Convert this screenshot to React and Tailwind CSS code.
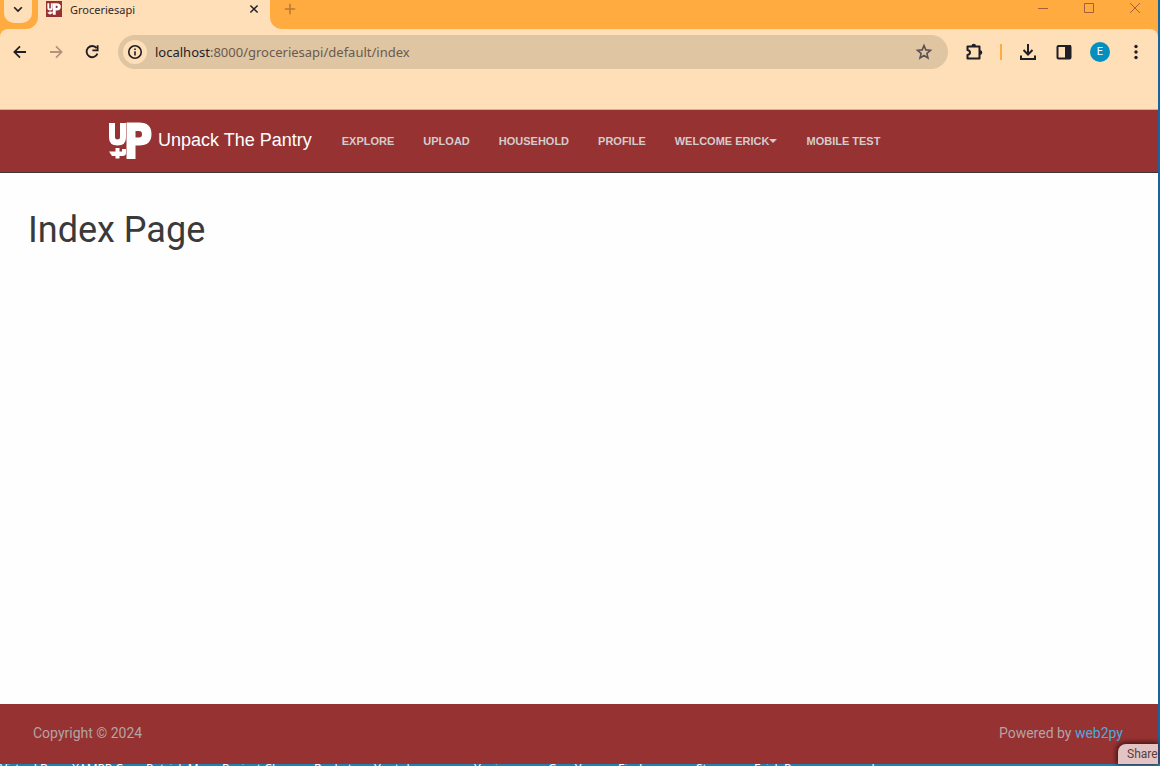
import React from "react";

const navLinks = ["Explore", "Upload", "Household", "Profile"];

const desktopLabels = [
  ["Virtual Box", "w-[72px]"],
  ["XAMPP Co", "w-[74px]"],
  ["Patrick Mo", "w-[76px]"],
  ["Project Ch", "w-[92px]"],
  ["Rocket", "w-[60px]"],
  ["Youtubapps", "w-[100px]"],
  ["Yoni", "w-[74px]"],
  ["Gup Y", "w-[70px]"],
  ["Firefox", "w-[78px]"],
  ["Steam", "w-[58px]"],
  ["Erick Person", "w-[96px]"],
  ["apple", "w-[60px]"],
];

function Logo({ className }) {
  return (
    <svg viewBox="0 0 44 38" className={className} fill="none" stroke="#fff" aria-hidden="true">
      <path d="M4 1V15.500Q4 20.500 9.500 20.500Q15 20.500 15 15.500V1" strokeWidth="6" />
      <path fill="#fff" stroke="none" fillRule="evenodd" d="M18.500 0.500H31Q43.500 0.500 43.500 12Q43.500 23.500 31 23.500H27.500V37H18.500ZM27.500 9V15.500H31Q34 15.500 34 12.200Q34 9 31 9Z" />
      <path fill="#fff" stroke="none" d="M1 29.500H7.500V26H11.500V29.500H14V27H18V31Q18 34 14.500 34H11.500V36.500H7.500V34H4Z" />
    </svg>
  );
}

function Favicon() {
  return (
    <span className="flex size-4 items-center justify-center bg-[#963232]">
      <Logo className="h-3 w-3.5" />
    </span>
  );
}

function Icon({ d, className = "size-5", width = 2, children }) {
  return (
    <svg viewBox="0 0 20 20" className={className} fill="none" stroke="currentColor" strokeWidth={width} aria-hidden="true">
      {d && <path d={d} />}
      {children}
    </svg>
  );
}

function ToolButton({ label, className = "text-[#1f1d26]", children }) {
  return (
    <button type="button" aria-label={label} className={`flex size-9 shrink-0 items-center justify-center ${className}`}>
      {children}
    </button>
  );
}

function TabStrip() {
  return (
    <div className="flex h-[29px] items-stretch">
      <div className="w-[38px] bg-[#ffdfb8]">
        <div className="h-full rounded-br-xl bg-[#ffab40] pl-1">
          <button type="button" aria-label="Search tabs" className="flex h-[23px] w-7 items-center justify-center rounded-b-[10px] bg-[#ffdfb8] pb-1.5 text-[#1f1d26]">
            <Icon className="size-3.5" width={2.400} d="M4.500 7.500L10 13L15.500 7.500" />
          </button>
        </div>
      </div>
      <div className="flex w-[232px] items-start bg-[#ffdfb8] px-2">
        <div className="pt-px"><Favicon /></div>
        <span className="flex-1 pl-2 pt-px font-['Noto_Sans',sans-serif] text-[11px] leading-[18px] text-[#2f2826]">Groceriesapi</span>
        <button type="button" aria-label="Close tab" className="flex size-4 items-center justify-center pt-0.5 text-[#1f1d26]">
          <Icon className="size-3" width={2.400} d="M4 4L16 16M16 4L4 16" />
        </button>
      </div>
      <div className="flex-1 bg-[#ffdfb8]">
        <div className="flex h-full items-start justify-between rounded-bl-xl bg-[#ffab40] pl-3">
          <button type="button" aria-label="New tab" className="flex h-[18px] w-4 items-center justify-center text-[#b97a35]">
            <Icon className="size-4" d="M10 3.500V16.500M3.500 10H16.500" />
          </button>
          <div className="flex text-[#a3623a]">
            <button type="button" aria-label="Minimize" className="flex h-4 w-[46px] items-center justify-center">
              <svg viewBox="0 0 10 10" className="size-2.5" aria-hidden="true"><path d="M0 5.500H10" stroke="currentColor" /></svg>
            </button>
            <button type="button" aria-label="Maximize" className="flex h-4 w-[46px] items-center justify-center">
              <svg viewBox="0 0 10 10" className="size-2.5" fill="none" aria-hidden="true"><path d="M.5 .5H9.500V9.500H.5Z" stroke="currentColor" /></svg>
            </button>
            <button type="button" aria-label="Close" className="flex h-4 w-[46px] items-center justify-center">
              <svg viewBox="0 0 10 10" className="size-2.5" aria-hidden="true"><path d="M0 0L10 10M10 0L0 10" stroke="currentColor" /></svg>
            </button>
          </div>
        </div>
      </div>
    </div>
  );
}

function Toolbar() {
  return (
    <div className="bg-[#ffab40]">
      <div className="flex h-[46px] items-center rounded-t-lg bg-[#ffdfb8] pl-0.5 pr-1">
        <ToolButton label="Back"><Icon className="size-4" width={2.200} d="M17.500 10H3.500M10 3L3 10L10 17" /></ToolButton>
        <ToolButton label="Forward" className="text-[#b5927c]"><Icon className="size-4" width={2.200} d="M2.500 10H16.500M10 3L17 10L10 17" /></ToolButton>
        <ToolButton label="Reload">
          <Icon className="size-4" width={2.300}><path d="M15.800 5.200A7 7 0 1 0 16.800 12" /><path d="M17 1.500V8H10.500" /></Icon>
        </ToolButton>
        <div className="ml-2 flex h-[34px] flex-1 items-center rounded-full bg-[#dfc5a2] pl-[5px] pr-3">
          <button type="button" aria-label="View site information" className="flex size-6 items-center justify-center rounded-full bg-[#ffdfb8] text-[#1f1d26]">
            <Icon className="size-4"><circle cx="10" cy="10" r="7.800" /><path d="M10 9V14.500M10 5.500V7.500" /></Icon>
          </button>
          <div className="flex-1 pl-2 font-['Noto_Sans',sans-serif] text-[13px] leading-5 text-[#6a5a50]">
            <span className="text-[#1f1d26]">localhost</span>:8000/groceriesapi/default/index
          </div>
          <button type="button" aria-label="Bookmark this tab" className="flex size-6 items-center justify-center text-[#5c5054]">
            <Icon className="size-5" width={1.600} d="M10 3.500L11.800 7.900L16.500 8.300L12.900 11.400L14 16L10 13.500L6 16L7.100 11.400L3.500 8.300L8.200 7.900Z" />
          </button>
        </div>
        <ToolButton label="Extensions" className="ml-2 text-[#1f1d26]">
          <Icon><path d="M3.500 4.500H15.500V16.500H3.500V13Q6 12.500 6 10.500Q6 8.500 3.500 8Z" strokeLinejoin="round" /><path d="M7.500 4A2.200 2.200 0 0 1 12 4ZM16 8.200A2.200 2.200 0 0 1 16 12.800Z" fill="currentColor" stroke="none" /></Icon>
        </ToolButton>
        <span className="mx-2 h-4 w-0.5 bg-[#ffab40]" />
        <ToolButton label="Downloads"><Icon d="M10 2V12M5.500 8L10 12.500L14.500 8M3 13.500V17H17V13.500" /></ToolButton>
        <ToolButton label="Side panel">
          <Icon><rect x="3.500" y="4" width="13" height="12.500" rx="1" /><path d="M12 4H16V16H12Z" fill="currentColor" /></Icon>
        </ToolButton>
        <ToolButton label="Profile E"><span className="flex size-5 items-center justify-center rounded-full bg-[#038fbf] font-['Roboto',sans-serif] text-[11px] text-white">E</span></ToolButton>
        <ToolButton label="More"><Icon><g fill="currentColor" stroke="none"><circle cx="10" cy="4.500" r="1.700" /><circle cx="10" cy="10" r="1.700" /><circle cx="10" cy="15.500" r="1.700" /></g></Icon></ToolButton>
      </div>
    </div>
  );
}

function SiteHeader() {
  return (
    <header className="flex h-[63px] items-center border-b border-[#403535] bg-[#963232] pl-[108px] font-['Liberation_Sans',Arial,sans-serif]">
      <a href="#home" className="flex items-center text-lg text-white">
        <Logo className="h-[38px] w-11" />
        <span className="pb-0.5 pl-1.5">Unpack The Pantry</span>
      </a>
      <nav className="ml-[30px] flex gap-[29px] text-[11px] font-bold uppercase text-[#d3cccc]">
        {navLinks.map((label) => <a key={label} href={"#" + label.toLowerCase()}>{label}</a>)}
        <button type="button" className="flex items-center uppercase" aria-haspopup="menu">
          Welcome Erick
          <svg viewBox="0 0 8 4" className="h-1 w-2" fill="currentColor" aria-hidden="true"><path d="M0 0H8L4 4Z" /></svg>
        </button>
        <a href="#mobile">Mobile Test</a>
      </nav>
    </header>
  );
}

export default function App() {
  return (
    <div className="flex h-screen flex-col overflow-hidden bg-[#1665a0]">
      <div className="mr-0.5 flex min-h-0 flex-1 flex-col bg-[#fefefe]">
        <TabStrip />
        <Toolbar />
        <div className="h-[35px] border-b border-[#cfb393] bg-[#ffdfb8]" />
        <SiteHeader />
        <main className="flex-1 px-7 pt-[37px]">
          <h1 className="font-['Roboto',sans-serif] text-[36px] leading-10 text-[#3a3a3a]">Index Page</h1>
        </main>
        <footer className="relative flex h-[60px] items-center justify-between bg-[#963232] pb-0.5 pl-[33px] pr-[35px] font-['Roboto',sans-serif] text-sm text-[#b3a4a4]">
          <span>Copyright © 2024</span>
          <span>Powered by <a href="#web2py" className="text-[#4daadf]">web2py</a></span>
          <button type="button" className="absolute bottom-0 right-0 h-5 w-10 rounded-tl-lg bg-[#e3c3c3] pl-[9px] text-left text-xs text-[#574040] shadow-[-1px_-1px_4px_1px_#4a1515]">Share</button>
        </footer>
      </div>
      <div className="flex h-0.5 overflow-hidden whitespace-nowrap bg-[#1f82b0] font-['Noto_Sans',sans-serif] text-xs leading-[10px] text-white">
        {desktopLabels.map(([label, width]) => <span key={label} className={`shrink-0 ${width}`}>{label}</span>)}
      </div>
    </div>
  );
}
